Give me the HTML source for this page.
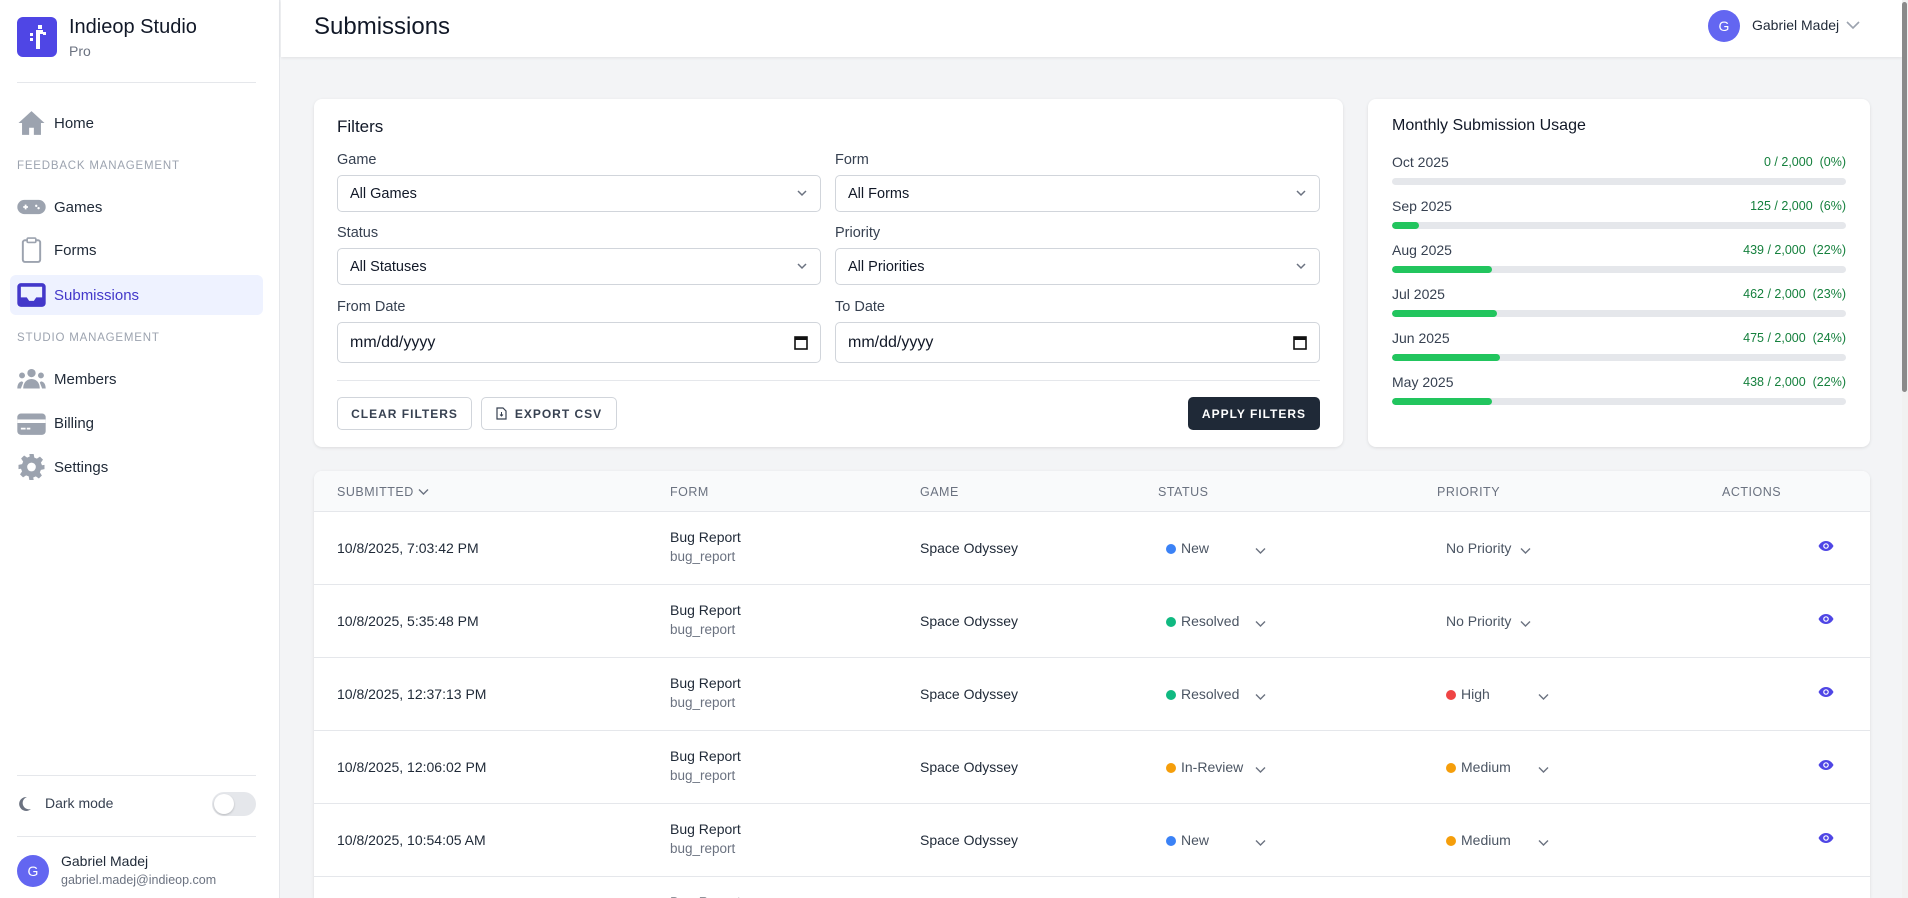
<!DOCTYPE html>
<html style="overflow:hidden;height:898px"><head><meta charset="utf-8"><style>
*{box-sizing:border-box;margin:0;padding:0}
body{width:1908px;height:898px;overflow:hidden;background:#f3f4f6;font-family:"Liberation Sans",sans-serif;color:#111827;position:relative}
.a{position:absolute}
.sb{left:0;top:0;width:280px;height:898px;background:#fff;border-right:1px solid #e5e7eb}
.nav{left:17px;font-size:15px;color:#1f2937;display:flex;align-items:center;gap:8px}
.nav svg{width:29px;height:26px}
.sec{left:17px;font-size:11.5px;letter-spacing:.8px;color:#9ca3af}
.hdr{left:281px;top:0;width:1621px;height:57px;background:#fff;box-shadow:0 1px 3px rgba(0,0,0,.08)}
.card{background:#fff;border-radius:8px;box-shadow:0 1px 3px rgba(0,0,0,.1)}
.lbl{font-size:14.5px;color:#374151}
.sel{height:37px;border:1px solid #d1d5db;border-radius:5px;background:#fff;font-size:14.5px;color:#111827;display:flex;align-items:center;padding-left:12px}
.sel .ch{position:absolute;right:12px;top:11px}
.btn{height:33px;border:1px solid #d1d5db;border-radius:5px;font-size:12px;letter-spacing:1px;font-weight:bold;color:#374151;display:flex;align-items:center;justify-content:center;background:#fff}
.mrow{left:24px;width:454px;font-size:14px;color:#374151}
.mrow .v{position:absolute;right:0;top:1px;font-size:12.5px;color:#15803d}
.bar{left:24px;width:454px;height:7px;border-radius:4px;background:#e5e7eb;overflow:hidden}
.bar i{display:block;height:7px;background:#22c55e;border-radius:4px}
.th{top:14px;font-size:12.5px;color:#6b7280;letter-spacing:.5px}
.row{left:0;width:1556px;height:73px;border-top:1px solid #e5e7eb}
.td{font-size:14px;color:#1f2937}
.dot{display:inline-block;width:10px;height:10px;border-radius:50%;margin-right:5px;vertical-align:-1px}
.sub{font-size:13.5px;color:#6b7280}
</style></head><body>
<div class="a sb">
  <div class="a" style="left:17px;top:17px;width:40px;height:40px;background:#4f46e5;border-radius:6px">
    <svg width="40" height="40" viewBox="0 0 40 40"><rect x="21" y="8" width="4" height="4" fill="#fff"/><rect x="19" y="13" width="7" height="4" fill="#fff"/><rect x="26" y="15" width="3" height="3" fill="#fff"/><rect x="13" y="16" width="3" height="3" fill="#fff"/><rect x="13" y="21" width="3" height="3" fill="#fff"/><rect x="19" y="17" width="4" height="15" fill="#fff"/></svg>
  </div>
  <div class="a" style="left:69px;top:16px;font-size:20px;color:#111827">Indieop Studio</div>
  <div class="a" style="left:69px;top:43px;font-size:14px;color:#6b7280">Pro</div>
  <div class="a" style="left:17px;top:82px;width:239px;height:1px;background:#e5e7eb"></div>
  <div class="a nav" style="top:110px"><svg viewBox="0 0 24 22"><path d="M12 1L1 11h3v10h6v-6h4v6h6V11h3z" fill="#9ca3af"/></svg>Home</div>
  <div class="a sec" style="top:160px">FEEDBACK MANAGEMENT</div>
  <div class="a nav" style="top:194px"><svg viewBox="0 0 24 22"><rect x="0" y="5" width="24" height="12" rx="6" fill="#9ca3af"/><path d="M5 11h4M7 9v4" stroke="#fff" stroke-width="1.5"/><circle cx="16" cy="10" r="1" fill="#fff"/><circle cx="18" cy="12" r="1" fill="#fff"/></svg>Games</div>
  <div class="a nav" style="top:237px"><svg viewBox="0 0 24 24"><rect x="4" y="3" width="16" height="20" rx="2" fill="none" stroke="#9ca3af" stroke-width="1.8"/><rect x="8" y="1" width="8" height="4" rx="1" fill="#fff" stroke="#9ca3af" stroke-width="1.5"/></svg>Forms</div>
  <div class="a" style="left:10px;top:275px;width:253px;height:40px;background:#eef2ff;border-radius:6px"></div>
  <div class="a nav" style="top:282px;color:#4338ca"><svg viewBox="0 0 24 22"><rect x="0" y="1" width="24" height="20" rx="3" fill="#4338ca"/><path d="M3 4h18v9h-5l-2 3h-4l-2-3H3z" fill="#eef2ff"/></svg>Submissions</div>
  <div class="a sec" style="top:332px">STUDIO MANAGEMENT</div>
  <div class="a nav" style="top:366px"><svg viewBox="0 0 24 22"><circle cx="12" cy="6" r="3.5" fill="#9ca3af"/><circle cx="4" cy="8" r="2.5" fill="#9ca3af"/><circle cx="20" cy="8" r="2.5" fill="#9ca3af"/><path d="M5 19c0-5 3-8 7-8s7 3 7 8z M0 19c0-4 2-6 4-6l1 1-2 5z M24 19c0-4-2-6-4-6l-1 1 2 5z" fill="#9ca3af"/></svg>Members</div>
  <div class="a nav" style="top:410px"><svg viewBox="0 0 24 22"><rect x="0" y="3" width="24" height="18" rx="3" fill="#9ca3af"/><rect x="0" y="8" width="24" height="3" fill="#fff"/><rect x="3" y="15" width="4" height="1.5" fill="#fff"/><rect x="8" y="15" width="3" height="1.5" fill="#fff"/></svg>Billing</div>
  <div class="a nav" style="top:454px"><svg viewBox="0 0 24 24"><path d="M10 0h4l.6 3.3 2.4 1 2.8-1.9 2.8 2.8-1.9 2.8 1 2.4L24 10v4l-3.3.6-1 2.4 1.9 2.8-2.8 2.8-2.8-1.9-2.4 1L14 24h-4l-.6-3.3-2.4-1-2.8 1.9-2.8-2.8 1.9-2.8-1-2.4L0 14v-4l3.3-.6 1-2.4-1.9-2.8 2.8-2.8 2.8 1.9 2.4-1z" fill="#9ca3af"/><circle cx="12" cy="12" r="4" fill="#fff"/></svg>Settings</div>
  <div class="a" style="left:17px;top:775px;width:239px;height:1px;background:#e5e7eb"></div>
  <svg class="a" style="left:17px;top:796px" width="15" height="16" viewBox="0 0 15 16"><path d="M10 1A7 7 0 1 0 14 13 6 6 0 0 1 10 1z" fill="#6b7280"/></svg>
  <div class="a" style="left:45px;top:795px;font-size:14px;color:#374151">Dark mode</div>
  <div class="a" style="left:212px;top:792px;width:44px;height:24px;border-radius:12px;background:#e5e7eb"><div class="a" style="left:2px;top:2px;width:20px;height:20px;border-radius:50%;background:#fff;box-shadow:0 1px 2px rgba(0,0,0,.2)"></div></div>
  <div class="a" style="left:17px;top:836px;width:239px;height:1px;background:#e5e7eb"></div>
  <div class="a" style="left:17px;top:855px;width:32px;height:32px;border-radius:50%;background:#6366f1;color:#fff;font-size:14px;display:flex;align-items:center;justify-content:center">G</div>
  <div class="a" style="left:61px;top:853px;font-size:14px;color:#1f2937">Gabriel Madej</div>
  <div class="a" style="left:61px;top:873px;font-size:12.5px;color:#6b7280">gabriel.madej@indieop.com</div>
</div>
<div class="a hdr">
  <div class="a" style="left:33px;top:13px;font-size:24px;color:#111827">Submissions</div>
  <div class="a" style="left:1427px;top:10px;width:32px;height:32px;border-radius:50%;background:#6366f1;color:#fff;font-size:14px;display:flex;align-items:center;justify-content:center">G</div>
  <div class="a" style="left:1471px;top:17px;font-size:14px;color:#1f2937">Gabriel Madej</div>
  <svg class="a" style="left:1565px;top:20px" width="14" height="10" viewBox="0 0 14 10"><path d="M1 2l6 6 6-6" fill="none" stroke="#9ca3af" stroke-width="1.6"/></svg>
</div>
<div class="a" style="left:1902px;top:0;width:6px;height:898px;background:#f1f1f1"><div style="margin-top:2px;height:390px;width:5px;background:#8a8a8a;border-radius:3px"></div></div>

<div class="a card" style="left:314px;top:99px;width:1029px;height:348px">
  <div class="a" style="left:23px;top:18px;font-size:17px;color:#111827">Filters</div>
  <div class="a lbl" style="left:23px;top:53px">Game</div>
  <div class="a lbl" style="left:521px;top:53px">Form</div>
  <div class="a sel" style="left:23px;top:76px;width:484px">All Games<svg class="ch" width="12" height="12" viewBox="0 0 12 12"><path d="M2 4l4 4 4-4" fill="none" stroke="#6b7280" stroke-width="1.5"/></svg></div>
  <div class="a sel" style="left:521px;top:76px;width:485px">All Forms<svg class="ch" width="12" height="12" viewBox="0 0 12 12"><path d="M2 4l4 4 4-4" fill="none" stroke="#6b7280" stroke-width="1.5"/></svg></div>
  <div class="a lbl" style="left:23px;top:126px">Status</div>
  <div class="a lbl" style="left:521px;top:126px">Priority</div>
  <div class="a sel" style="left:23px;top:149px;width:484px">All Statuses<svg class="ch" width="12" height="12" viewBox="0 0 12 12"><path d="M2 4l4 4 4-4" fill="none" stroke="#6b7280" stroke-width="1.5"/></svg></div>
  <div class="a sel" style="left:521px;top:149px;width:485px">All Priorities<svg class="ch" width="12" height="12" viewBox="0 0 12 12"><path d="M2 4l4 4 4-4" fill="none" stroke="#6b7280" stroke-width="1.5"/></svg></div>
  <div class="a lbl" style="left:23px;top:200px">From Date</div>
  <div class="a lbl" style="left:521px;top:200px">To Date</div>
  <div class="a sel" style="left:23px;top:223px;width:484px;height:41px;font-size:16px">mm/dd/yyyy<svg class="ch" style="top:12px" width="14" height="15" viewBox="0 0 14 15"><rect x="1" y="2" width="12" height="12" fill="none" stroke="#111" stroke-width="1.6"/><rect x="1" y="2" width="12" height="3" fill="#111"/></svg></div>
  <div class="a sel" style="left:521px;top:223px;width:485px;height:41px;font-size:16px">mm/dd/yyyy<svg class="ch" style="top:12px" width="14" height="15" viewBox="0 0 14 15"><rect x="1" y="2" width="12" height="12" fill="none" stroke="#111" stroke-width="1.6"/><rect x="1" y="2" width="12" height="3" fill="#111"/></svg></div>
  <div class="a" style="left:23px;top:281px;width:983px;height:1px;background:#e5e7eb"></div>
  <div class="a btn" style="left:23px;top:298px;width:135px">CLEAR FILTERS</div>
  <div class="a btn" style="left:167px;top:298px;width:136px;gap:8px"><svg width="11" height="13" viewBox="0 0 11 13"><path d="M1 1h6l3 3v8H1z" fill="none" stroke="#374151" stroke-width="1.2"/><path d="M5.5 5v4M4 7.5l1.5 1.5 1.5-1.5" fill="none" stroke="#374151" stroke-width="1"/></svg>EXPORT CSV</div>
  <div class="a btn" style="left:874px;top:298px;width:132px;background:#1f2937;border-color:#1f2937;color:#fff">APPLY FILTERS</div>
</div>

<div class="a card" style="left:1368px;top:99px;width:502px;height:348px">
  <div class="a" style="left:24px;top:18px;font-size:16px;color:#111827">Monthly Submission Usage</div>
  <div class="a mrow" style="top:55px">Oct 2025<span class="v">0 / 2,000 &nbsp;(0%)</span></div>
  <div class="a bar" style="top:79px"><i style="width:0"></i></div>
  <div class="a mrow" style="top:99px">Sep 2025<span class="v">125 / 2,000 &nbsp;(6%)</span></div>
  <div class="a bar" style="top:123px"><i style="width:27px"></i></div>
  <div class="a mrow" style="top:143px">Aug 2025<span class="v">439 / 2,000 &nbsp;(22%)</span></div>
  <div class="a bar" style="top:167px"><i style="width:100px"></i></div>
  <div class="a mrow" style="top:187px">Jul 2025<span class="v">462 / 2,000 &nbsp;(23%)</span></div>
  <div class="a bar" style="top:211px"><i style="width:105px"></i></div>
  <div class="a mrow" style="top:231px">Jun 2025<span class="v">475 / 2,000 &nbsp;(24%)</span></div>
  <div class="a bar" style="top:255px"><i style="width:108px"></i></div>
  <div class="a mrow" style="top:275px">May 2025<span class="v">438 / 2,000 &nbsp;(22%)</span></div>
  <div class="a bar" style="top:299px"><i style="width:100px"></i></div>
</div>

<div class="a card" style="left:314px;top:471px;width:1556px;height:427px;overflow:hidden;border-radius:8px 8px 0 0">
  <div class="a" style="left:0;top:0;width:1556px;height:40px;background:#f9fafb"></div>
  <div class="a th" style="left:23px">SUBMITTED <svg width="11" height="8" viewBox="0 0 11 8"><path d="M1 1.5l4.5 4.5 4.5-4.5" fill="none" stroke="#6b7280" stroke-width="1.4"/></svg></div>
  <div class="a th" style="left:356px">FORM</div>
  <div class="a th" style="left:606px">GAME</div>
  <div class="a th" style="left:844px">STATUS</div>
  <div class="a th" style="left:1123px">PRIORITY</div>
  <div class="a th" style="left:1408px">ACTIONS</div>
  <div id="rows"></div>
</div>
<script>
var d=[["10/8/2025, 7:03:42 PM","New","#3b82f6","No Priority",""],
["10/8/2025, 5:35:48 PM","Resolved","#10b981","No Priority",""],
["10/8/2025, 12:37:13 PM","Resolved","#10b981","High","#ef4444"],
["10/8/2025, 12:06:02 PM","In-Review","#f59e0b","Medium","#f59e0b"],
["10/8/2025, 10:54:05 AM","New","#3b82f6","Medium","#f59e0b"],
["10/8/2025, 10:12:44 AM","New","#3b82f6","Medium","#f59e0b"]];
var ch='<svg width="11" height="8" viewBox="0 0 11 8"><path d="M1 1.5l4.5 4.5 4.5-4.5" fill="none" stroke="#6b7280" stroke-width="1.4"/></svg>';
var h='';d.forEach(function(r,i){var t=40+i*73;
h+='<div class="a row" style="top:'+t+'px">'+
'<div class="a td" style="left:23px;top:28px">'+r[0]+'</div>'+
'<div class="a td" style="left:356px;top:17px">Bug Report</div>'+
'<div class="a sub" style="left:356px;top:37px">bug_report</div>'+
'<div class="a td" style="left:606px;top:28px">Space Odyssey</div>'+
'<div class="a td" style="left:852px;top:28px;color:#4b5563"><span class="dot" style="background:'+r[2]+'"></span>'+r[1]+'</div>'+
'<div class="a" style="left:941px;top:30px">'+ch+'</div>'+
'<div class="a td" style="left:1132px;top:28px;color:#4b5563">'+(r[4]?'<span class="dot" style="background:'+r[4]+'"></span>':'')+r[3]+'</div>'+
'<div class="a" style="left:'+(r[4]?1224:1206)+'px;top:30px">'+ch+'</div>'+
'<svg class="a" style="left:1504px;top:28px" width="16" height="12" viewBox="0 0 16 12"><path d="M8 1C4 1 1.5 4 .5 6c1 2 3.5 5 7.5 5s6.5-3 7.5-5C14.5 4 12 1 8 1z" fill="#4f46e5"/><circle cx="8" cy="6" r="2.8" fill="#fff"/><circle cx="8" cy="6" r="1.6" fill="#4f46e5"/></svg>'+
'</div>';});
document.getElementById('rows').innerHTML=h;
</script>
</body></html>
